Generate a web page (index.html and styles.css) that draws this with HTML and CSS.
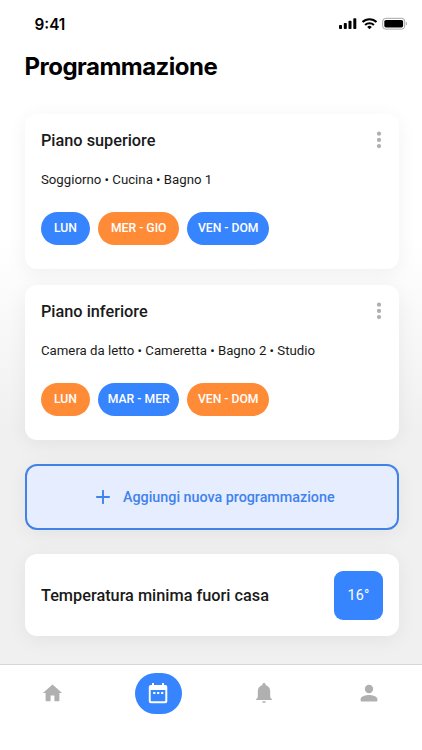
FILE: index.html
```html
<!DOCTYPE html>
<html lang="it">
<head>
  <meta charset="UTF-8">
  <meta name="viewport" content="width=device-width, initial-scale=1.0">
  <title>Programmazione</title>
  <link rel="stylesheet" href="styles.css">
</head>
<body>

<header>
  <div class="status-bar">
    <span class="ora">9:41</span>
    <svg class="status-icons" width="68" height="14" viewBox="0 0 68 14">
      <rect x="0" y="8" width="3" height="4" rx="0.8"/>
      <rect x="4.8" y="6" width="3" height="6" rx="0.8"/>
      <rect x="9.5" y="3.7" width="3" height="8.3" rx="0.8"/>
      <rect x="14.3" y="1.3" width="3" height="10.7" rx="0.8"/>
      <g fill="none" stroke="#000" stroke-width="2.1">
        <path d="M23.5 5.1a10 10 0 0 1 14 0"/>
        <path d="M26.1 8a6.3 6.3 0 0 1 8.8 0"/>
      </g>
      <path d="M28.2 9.9a3.4 3.4 0 0 1 4.6 0L30.5 12.3z"/>
      <rect x="43.7" y="1.3" width="22" height="10.8" rx="3" fill="none" stroke="#a6a6a6"/>
      <rect x="45.3" y="2.9" width="18.8" height="7.6" rx="1.7"/>
      <path d="M66.9 4.8c1.3.5 1.3 3.3 0 3.8z" fill="#a6a6a6"/>
    </svg>
  </div>
  <h1>Programmazione</h1>
</header>

<main>
  <section class="card">
    <div class="card-header">
      <h2>Piano superiore</h2>
      <svg class="menu" width="6" height="18" viewBox="0 0 6 18">
        <circle cx="3" cy="2.7" r="2.15"/>
        <circle cx="3" cy="8.9" r="2.15"/>
        <circle cx="3" cy="15.1" r="2.15"/>
      </svg>
    </div>
    <p class="stanze">Soggiorno • Cucina • Bagno 1</p>
    <div class="giorni">
      <span class="giorno corto blu">LUN</span>
      <span class="giorno arancio">MER - GIO</span>
      <span class="giorno blu">VEN - DOM</span>
    </div>
  </section>

  <section class="card">
    <div class="card-header">
      <h2>Piano inferiore</h2>
      <svg class="menu" width="6" height="18" viewBox="0 0 6 18">
        <circle cx="3" cy="2.7" r="2.15"/>
        <circle cx="3" cy="8.9" r="2.15"/>
        <circle cx="3" cy="15.1" r="2.15"/>
      </svg>
    </div>
    <p class="stanze">Camera da letto • Cameretta • Bagno 2 • Studio</p>
    <div class="giorni">
      <span class="giorno corto arancio">LUN</span>
      <span class="giorno blu">MAR - MER</span>
      <span class="giorno arancio">VEN - DOM</span>
    </div>
  </section>

  <button class="aggiungi">
    <svg width="14" height="14" viewBox="0 0 14 14">
      <path d="M7 .8v12.4M.8 7h12.4" stroke="currentColor" stroke-width="1.9" stroke-linecap="round"/>
    </svg>
    <span>Aggiungi nuova programmazione</span>
  </button>

  <section class="temperatura">
    <h2>Temperatura minima fuori casa</h2>
    <span class="gradi">16°</span>
  </section>
</main>

<nav>
  <a class="voce">
    <svg width="23" height="24" viewBox="0 0 24 24"><path d="M10 20.5v-6h4v6h4.2q1 0 1-1V12H22L12 3 2 12h2.8v7.5q0 1 1 1z"/></svg>
  </a>
  <a class="voce attiva">
    <svg width="24" height="24" viewBox="0 0 24 24"><path fill-rule="evenodd" d="M7.2 10.9h2.2v2.2H7.2zm3.9 0h2.2v2.2h-2.2zm4 0h2.2v2.2h-2.2zM19.3 4H18V2h-2v2H8V2H6v2H4.9Q2.8 4 2.8 6v14.2q0 2 2 2h14.5q2 0 2-2V6q0-2-2-2zm0 15.4q0 .8-.8.8h-13q-.8 0-.8-.8V9h14.6z"/></svg>
  </a>
  <a class="voce">
    <svg width="24" height="24" viewBox="0 0 24 24"><path d="M12 1.9c-.9 0-1.6.7-1.6 1.6v.5C7.7 4.8 5.8 7.2 5.8 10.2v6.3L4.2 18v1h15.6v-1l-1.6-1.5v-6.3c0-3-1.9-5.4-4.6-6.2v-.5c0-.9-.7-1.6-1.6-1.6zM10.2 20.2c.2 1 .9 1.7 1.8 1.7s1.6-.7 1.8-1.7z"/></svg>
  </a>
  <a class="voce">
    <svg width="24" height="24" viewBox="0 0 24 24"><path d="M12 12.2a4.2 4.2 0 1 0 0-8.4 4.2 4.2 0 0 0 0 8.4zm0 1.8c-2.67 0-8.4 1.34-8.4 4v1.4q0 1 1 1h14.8q1 0 1-1V18c0-2.66-5.73-4-8.4-4z"/></svg>
  </a>
</nav>

</body>
</html>
```

FILE: styles.css
```css
* {
  box-sizing: border-box;
}

body {
  display: flex;
  flex-direction: column;
  height: 750px;
  margin: 0;
  font-family: Roboto, sans-serif;
  color: #1a1a1a;
  background: linear-gradient(#fff 240px, #f0f0f0 430px);
}

h1, h2, p {
  margin: 0;
}

header {
  height: 114px;
  padding: 13px 15px 0 24.5px;
  font-family: Inter, sans-serif;
  color: #000;
}

.status-bar {
  display: flex;
  justify-content: space-between;
  align-items: center;
  height: 22px;
}

.ora {
  padding-left: 10px;
  font-size: 15.3px;
  font-weight: 600;
}

h1 {
  margin-top: 17px;
  font-size: 24px;
  font-weight: 700;
  line-height: 30px;
  letter-spacing: -0.52px;
}

main {
  display: flex;
  flex-direction: column;
  flex: 1;
  padding: 0 23px 0 24.6px;
}

.card, .aggiungi, .temperatura {
  border-radius: 12px;
  box-shadow: 0 4px 20px rgba(0, 0, 0, 0.06);
}

.card {
  height: 155px;
  margin-bottom: 16px;
  padding: 16px 17px 0 16.4px;
  background-color: #fff;
}

.card-header {
  display: flex;
  justify-content: space-between;
  align-items: center;
  height: 20px;
}

h2 {
  font-size: 16.3px;
  font-weight: 500;
}

.menu {
  fill: #b0b0b0;
}

.stanze {
  margin-top: 20px;
  font-size: 13.23px;
  line-height: 20px;
}

.giorni {
  display: flex;
  gap: 8px;
  margin-top: 22px;
}

.giorno {
  width: 81.5px;
  height: 33px;
  border-radius: 17px;
  font-size: 12.2px;
  font-weight: 500;
  line-height: 33px;
  text-align: center;
  white-space: nowrap;
  color: #fff;
}

.corto {
  width: 49px;
}

.blu {
  background-color: #3784ff;
}

.arancio {
  background-color: #ff8b37;
}

.aggiungi {
  display: flex;
  justify-content: center;
  align-items: center;
  gap: 13px;
  height: 66px;
  margin-top: 8px;
  padding: 0 0 0 7px;
  border: 2px solid #4082e6;
  background-color: #e6edff;
  color: #3f82ee;
  font-family: inherit;
  font-size: 14.3px;
  font-weight: 500;
}

.temperatura {
  display: flex;
  justify-content: space-between;
  align-items: center;
  height: 82px;
  margin-top: 24px;
  padding: 0 16.4px;
  background-color: #fff;
}

.gradi {
  width: 49px;
  height: 49px;
  padding-left: 1px;
  border-radius: 9px;
  background-color: #3784ff;
  color: #fff;
  font-size: 14.3px;
  letter-spacing: 0.3px;
  line-height: 49px;
  text-align: center;
}

nav {
  display: grid;
  grid-template-columns: repeat(4, 1fr);
  justify-items: center;
  height: 86px;
  padding-top: 8px;
  border-top: 1px solid #d6d6d6;
  background-color: #fff;
}

.voce {
  display: flex;
  justify-content: center;
  align-items: center;
  width: 47px;
  height: 41px;
  padding-bottom: 1px;
  border-radius: 21px;
  fill: #b0b0b0;
}

.attiva {
  background-color: #3784ff;
  fill: #fff;
}
```
